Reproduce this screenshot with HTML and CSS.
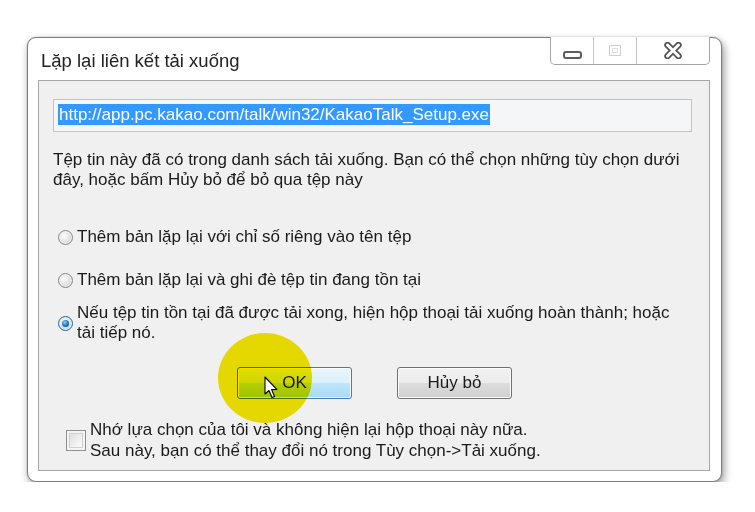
FILE: index.html
```html
<!DOCTYPE html>
<html lang="vi">
<head>
    <meta charset="UTF-8">
    <meta name="viewport" content="width=device-width, initial-scale=1.0">
    <title>Lặp lại liên kết tải xuống</title>
    <link rel="stylesheet" href="styles.css">
</head>
<body>
    <div class="window">
        <div class="titlebar">
            <div class="title">Lặp lại liên kết tải xuống</div>
            <div class="controls">
                <div class="ctrl ctrl-min"><span class="min-icon"></span></div>
                <div class="ctrl ctrl-max"><span class="max-icon"></span></div>
                <div class="ctrl ctrl-close">
                    <svg width="18" height="17" viewBox="0 0 18 17">
                        <path d="M3.5 3 L14.5 14 M14.5 3 L3.5 14" stroke="#555555" stroke-width="6.5" stroke-linecap="round"/>
                        <path d="M3.5 3 L14.5 14 M14.5 3 L3.5 14" stroke="#ffffff" stroke-width="3" stroke-linecap="round"/>
                    </svg>
                </div>
            </div>
        </div>
        <div class="client">
            <div class="url-box"><span class="selected">http://app.pc.kakao.com/talk/win32/KakaoTalk_Setup.exe</span></div>
            <p class="message">Tệp tin này đã có trong danh sách tải xuống. Bạn có thể chọn những tùy chọn dưới đây, hoặc bấm Hủy bỏ để bỏ qua tệp này</p>

            <div class="option option-first">
                <span class="radio"></span>
                <span class="option-text">Thêm bản lặp lại với chỉ số riêng vào tên tệp</span>
            </div>
            <div class="option option-second">
                <span class="radio"></span>
                <span class="option-text">Thêm bản lặp lại và ghi đè tệp tin đang tồn tại</span>
            </div>
            <div class="option option-third">
                <span class="radio checked"></span>
                <span class="option-text">Nếu tệp tin tồn tại đã được tải xong, hiện hộp thoại tải xuống hoàn thành; hoặc tải tiếp nó.</span>
            </div>

            <div class="buttons">
                <button class="btn btn-ok">OK</button>
                <button class="btn">Hủy bỏ</button>
                <div class="highlight"></div>
                <svg class="cursor" width="14" height="24" viewBox="0 0 14 24">
                    <path d="M1 1 L1 18 L5 14.5 L8 21.5 L10.5 20.5 L7.6 13.6 L12.8 13.4 Z" fill="#ffffff" stroke="#000000" stroke-width="1.1" stroke-linejoin="round"/>
                </svg>
            </div>

            <div class="remember">
                <span class="checkbox"></span>
                <span class="remember-text">Nhớ lựa chọn của tôi và không hiện lại hộp thoại này nữa.<br>Sau này, bạn có thể thay đổi nó trong Tùy chọn-&gt;Tải xuống.</span>
            </div>
        </div>
    </div>
</body>
</html>
```

FILE: styles.css
```css
body {
    margin: 0;
    padding: 0;
    background: #ffffff;
    font-family: "Liberation Sans", Arial, sans-serif;
    color: #1a1a1a;
}
.window {
    box-sizing: border-box;
    width: 695px;
    height: 445px;
    margin: 37px 0 0 27px;
    padding: 0 11px 10px 10px;
    background: #ffffff;
    border: 1px solid #7d7d7d;
    border-radius: 9px;
    box-shadow: 2px 4px 8px rgba(0, 0, 0, 0.4), 0 0 2px rgba(0, 0, 0, 0.2);
    display: flex;
    flex-direction: column;
}
.titlebar {
    height: 42px;
    display: flex;
    justify-content: space-between;
    align-items: flex-start;
}
.title {
    font-size: 18.5px;
    margin: 12px 0 0 3px;
    color: #222;
}
.controls {
    display: flex;
    margin-top: -1px;
    height: 27px;
    border: 1px solid #a4a4a4;
    border-top: none;
    border-radius: 0 0 5px 5px;
    background: #ffffff;
}
.ctrl {
    display: flex;
    align-items: center;
    justify-content: center;
    height: 100%;
}
.ctrl-min {
    width: 42px;
    border-right: 1px solid #c4c4c4;
}
.ctrl-max {
    width: 42px;
    border-right: 1px solid #c4c4c4;
}
.ctrl-close {
    width: 72px;
}
.min-icon {
    width: 15px;
    height: 4px;
    margin-top: 9px;
    border: 2px solid #5e5e5e;
    border-radius: 3px;
    background: #fff;
}
.max-icon {
    width: 10px;
    height: 9px;
    border: 1px solid #d0d0d0;
    box-shadow: inset 0 0 0 2px #fff, inset 0 0 0 3px #e0e0e0;
}
.client {
    flex: 1;
    background: #f0f0f0;
    border: 1px solid #a6a6a6;
    padding: 18px 17px 0 14px;
    font-size: 17px;
}
.url-box {
    box-sizing: border-box;
    height: 33px;
    border: 1px solid #b9c5d2;
    background: #f5f6f8;
    padding: 5px 0 0 4px;
}
.selected {
    background: #3399ff;
    color: #ffffff;
    padding: 1px 1px 1px 1px;
    font-size: 17px;
}
.message {
    margin: 18px 0 0 0;
    line-height: 20px;
}
.option {
    display: flex;
    align-items: center;
    line-height: 20px;
    margin-left: 5px;
    padding-right: 12px;
}
.option-first {
    margin-top: 37px;
}
.option-second {
    margin-top: 23px;
}
.option-third {
    margin-top: 13px;
}
.option-text {
    margin-left: 4px;
}
.radio {
    flex: none;
    width: 13px;
    height: 13px;
    border-radius: 50%;
    border: 1px solid #858686;
    background: radial-gradient(circle at 40% 40%, #ffffff 0%, #e3e3e3 50%, #c6c6c6 100%);
    box-shadow: inset 0 0 0 1px #f4f4f4;
}
.radio.checked {
    border-color: #2c628b;
    background: radial-gradient(circle at 45% 40%, #ffffff 0%, #d9ecf9 40%, #99c6e6 100%);
    position: relative;
}
.radio.checked::after {
    content: "";
    position: absolute;
    left: 3px;
    top: 3px;
    width: 7px;
    height: 7px;
    border-radius: 50%;
    background: radial-gradient(circle at 40% 35%, #8fd2f7 0%, #1d72b8 55%, #0c3e6b 100%);
}
.buttons {
    position: relative;
    display: flex;
    justify-content: center;
    gap: 45px;
    margin-top: 24px;
    padding-left: 4px;
}
.btn {
    box-sizing: border-box;
    width: 115px;
    height: 32px;
    font-family: "Liberation Sans", Arial, sans-serif;
    font-size: 17px;
    color: #1a1a1a;
    border: 1px solid #707070;
    border-radius: 3px;
    background: linear-gradient(#f2f2f2 0%, #ebebeb 50%, #dddddd 51%, #cfcfcf 100%);
    box-shadow: inset 0 0 0 1px #fcfcfc;
    padding: 0;
}
.btn-ok {
    border-color: #3c7fb1;
    background: linear-gradient(#eaf6fd 0%, #d9f0fc 50%, #bee6fd 51%, #a7d9f5 100%);
    padding-left: 0;
}
.highlight {
    position: absolute;
    left: 165px;
    top: -34px;
    width: 94px;
    height: 90px;
    border-radius: 50%;
    background: #f4e500;
    mix-blend-mode: multiply;
    pointer-events: none;
}
.cursor {
    position: absolute;
    left: 211px;
    top: 9px;
}
.remember {
    display: flex;
    align-items: center;
    margin: 20px 0 0 13px;
    line-height: 21px;
}
.checkbox {
    flex: none;
    box-sizing: border-box;
    width: 20px;
    height: 21px;
    border: 1px solid #8f8f8f;
    background: linear-gradient(135deg, #d8d8d8 0%, #f2f2f2 60%, #ffffff 100%);
    box-shadow: inset 0 0 0 2px #f4f4f4, inset 0 0 0 3px #cfcfcf;
    margin-right: 4px;
}
```
